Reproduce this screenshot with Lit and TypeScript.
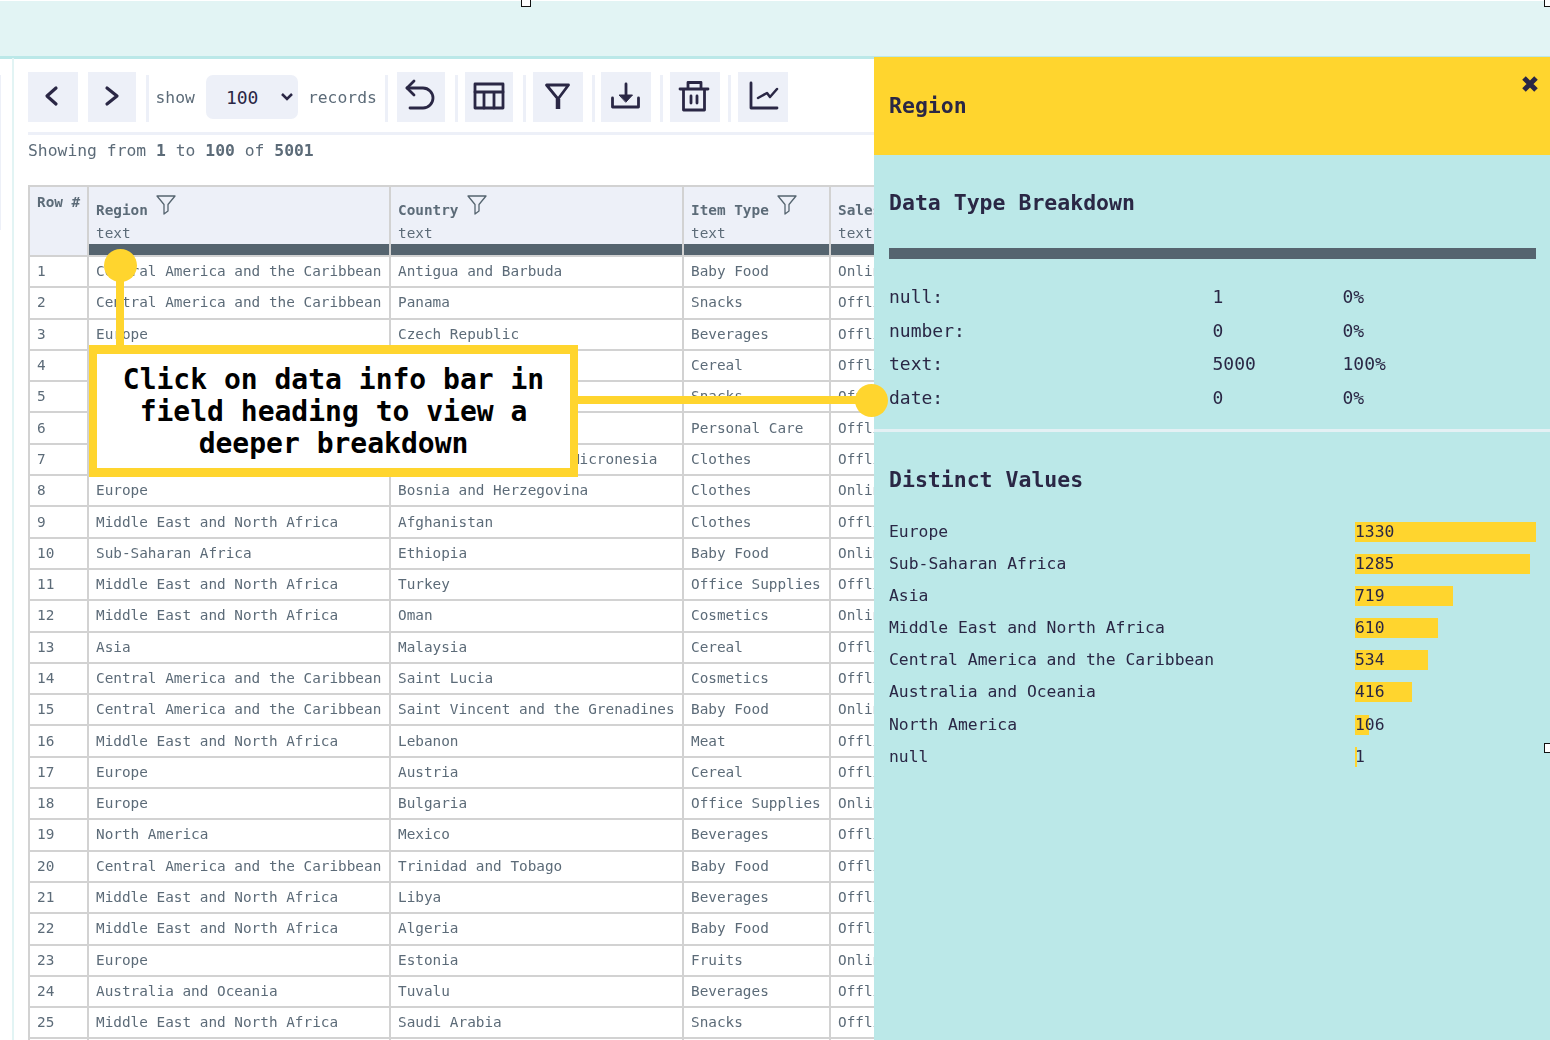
import { LitElement, html, css, svg } from "lit";
import { customElement } from "lit/decorators.js";

const rows: string[][] = [
  ["1","Central America and the Caribbean","Antigua and Barbuda","Baby Food","Online"],
  ["2","Central America and the Caribbean","Panama","Snacks","Offline"],
  ["3","Europe","Czech Republic","Beverages","Offline"],
  ["4","Asia","North Korea","Cereal","Offline"],
  ["5","Asia","Sri Lanka","Snacks","Offline"],
  ["6","Middle East and North Africa","Morocco","Personal Care","Offline"],
  ["7","Australia and Oceania","Federated States of Micronesia","Clothes","Offline"],
  ["8","Europe","Bosnia and Herzegovina","Clothes","Online"],
  ["9","Middle East and North Africa","Afghanistan","Clothes","Offline"],
  ["10","Sub-Saharan Africa","Ethiopia","Baby Food","Online"],
  ["11","Middle East and North Africa","Turkey","Office Supplies","Offline"],
  ["12","Middle East and North Africa","Oman","Cosmetics","Online"],
  ["13","Asia","Malaysia","Cereal","Offline"],
  ["14","Central America and the Caribbean","Saint Lucia","Cosmetics","Offline"],
  ["15","Central America and the Caribbean","Saint Vincent and the Grenadines","Baby Food","Online"],
  ["16","Middle East and North Africa","Lebanon","Meat","Offline"],
  ["17","Europe","Austria","Cereal","Offline"],
  ["18","Europe","Bulgaria","Office Supplies","Online"],
  ["19","North America","Mexico","Beverages","Offline"],
  ["20","Central America and the Caribbean","Trinidad and Tobago","Baby Food","Offline"],
  ["21","Middle East and North Africa","Libya","Beverages","Offline"],
  ["22","Middle East and North Africa","Algeria","Baby Food","Offline"],
  ["23","Europe","Estonia","Fruits","Online"],
  ["24","Australia and Oceania","Tuvalu","Beverages","Offline"],
  ["25","Middle East and North Africa","Saudi Arabia","Snacks","Offline"],
  ["26","Asia","Vietnam","Cereal","Offline"],
];

const types = [["null:","1","0%"],["number:","0","0%"],["text:","5000","100%"],["date:","0","0%"]];
const distinct: [string,number][] = [
  ["Europe",1330],["Sub-Saharan Africa",1285],["Asia",719],["Middle East and North Africa",610],
  ["Central America and the Caribbean",534],["Australia and Oceania",416],["North America",106],["null",1],
];

const funnelThin = svg`<svg class="hf" viewBox="0 0 20 20" fill="none" stroke="#55646f" stroke-width="1.3" stroke-linejoin="round"><path d="M1 1h18l-7 8.500V16l-4 3V9.500z"/></svg>`;
const icon = (body: unknown) => html`<svg class="ico" viewBox="0 0 36 36" fill="none" stroke="#2a2745" stroke-width="2.800" stroke-linecap="round" stroke-linejoin="round">${body}</svg>`;
const icons = {
  prev: svg`<path d="M21 9l-9 8 9 8" stroke-width="3.200"/>`,
  next: svg`<path d="M13 9l10 8-10 8" stroke-width="3.200"/>`,
  undo: svg`<path d="M11 2L4 9l7 7"/><path d="M4 9h16a10 10 0 0 1 0 20H7"/>`,
  table: svg`<path d="M4 5h28v24H4z" stroke-linecap="square"/><path d="M4 13h28M13 13v16M23 13v16"/>`,
  filter: svg`<path d="M6.500 6h22L18 20z"/><path d="M18 20v10" stroke-width="4.500" stroke-linecap="butt"/>`,
  down: svg`<path d="M18 5v12"/><path d="M11.500 16h13L18 23z" fill="#2a2745" stroke-width="1"/><path d="M4.500 19v9h26v-9"/>`,
  trash: svg`<path d="M3 10h28M11 10V3.500h13V10M6.500 10v21h21V10"/><path d="M14 17v7M20 17v7"/>`,
  chart: svg`<path d="M6 4v25h26"/><path d="M13 19l9-5 3 4 7-8" stroke-width="2.500"/>`,
};

@customElement("app-root")
export class AppRoot extends LitElement {
  static styles = css`
    :host { display: block; width: 1550px; height: 1040px; overflow: hidden; position: relative; background: #fff;
      font-family: "DejaVu Sans Mono", "Liberation Mono", monospace; color: #5c6b78; }
    .top { height: 55px; background: #e2f4f4; border-bottom: 3px solid #bbe8e8; margin-top: 1px; margin-bottom: -1px; }
    .body { height: 982px; display: flex; position: relative; filter: blur(0.350px); }
    .rail { width: 12px; flex: none; border-right: 2px solid #e2f4f4; position: relative; }
    .rail-tab { position: absolute; left: 0; top: 17px; height: 155px; width: 1px; background: #edf0f8; }
    .main { width: 862px; flex: none; padding: 14px 0 0 14px; box-sizing: border-box; overflow: hidden; }
    .toolbar { display: flex; align-items: center; height: 50px; width: 900px; }
    .btn { width: 48px; height: 50px; background: #edf0f8; display: flex; align-items: center; justify-content: center; flex: none; }
    .btn.w50 { width: 50px; }
    .btn.next { margin-left: 10px; }
    .sep { width: 3px; height: 47px; background: #edf0f8; margin: 3px 7px 0 9.500px; flex: none; }
    .sep.s0 { margin: 3px 9px 0 8.300px; }
    .sep.s1 { margin: 3px 7px 0 10px; }
    .sep.s2 { margin: 3px 6px 0 9px; }
    .sep.s3 { margin: 3px 7px 0 9px; }
    .sep.s4 { margin: 3px 7px 0 8px; }
    .ico { width: 36px; height: 36px; }
    .lbl { font-size: 16.360px; flex: none; }
    .select { width: 92px; height: 44px; margin: 0 10px 0 11px; background: #edf0f8; border-radius: 7px; display: flex; align-items: center; box-sizing: border-box; padding-left: 20px; color: #2a2745; font-size: 18px; position: relative; flex: none; }
    .chev { position: absolute; right: 4px; top: 17px; width: 14px; height: 10px; }
    .rule { height: 3px; background: #edf0f8; margin-top: 10px; width: 900px; }
    .status { font-size: 16.360px; margin-top: 4px; line-height: 24px; height: 24px; white-space: pre; }
    table { border-collapse: collapse; table-layout: fixed; width: 999px; margin-top: 22px; font-size: 14.360px; }
    col.c0 { width: 59px; } col.c1 { width: 302px; } col.c2 { width: 293px; } col.c3 { width: 147px; } col.c4 { width: 198px; }
    th, td { border: 2px solid #d2d2d2; padding: 0 0 0 7px; text-align: left; white-space: nowrap; overflow: hidden; font-weight: normal; }
    td { height: 28.300px; padding-bottom: 1px; line-height: 20px; }
    th { background: #edf0f8; vertical-align: top; padding: 0; }
    .th-in { height: 57px; padding: 6px 0 0 7px; box-sizing: border-box; }
    .name { font-weight: bold; display: inline-block; margin-top: 7px; line-height: 20px; }
    .hf { width: 20px; height: 20px; position: relative; top: 1px; margin-left: 8px; vertical-align: top; margin-top: 1px; }
    .type { line-height: 20px; margin-top: 3px; }
    .bar { height: 11px; background: #55646f; }
    .row-head { padding: 5px 0 0 7px; line-height: 20px; font-weight: bold; }
    .panel { position: absolute; left: 874px; top: 57px; width: 676px; height: 983px; background: #bbe8e8; color: #2a2745; overflow: hidden; filter: blur(0.350px); }
    .ph { height: 98px; background: #ffd52e; position: relative; }
    .ph h1 { margin: 0; position: absolute; left: 15px; top: 35px; font-size: 21.500px; line-height: 28px; font-weight: bold; }
    .x { position: absolute; right: 12px; top: 19px; width: 16px; height: 16px; }
    .sec1 { padding: 35px 14px 0 15px; height: 277px; box-sizing: border-box; border-bottom: 3px solid #e4f0f4; }
    h2 { margin: 0; font-size: 21.500px; line-height: 26px; font-weight: bold; }
    .pbar { height: 11px; background: #55646f; margin-top: 32px; }
    .types { margin-top: 21px; font-size: 18px; display: grid; grid-template-columns: 323.500px 130px 1fr; }
    .types div { height: 33.600px; line-height: 33.600px; }
    .sec2 { padding: 35px 14px 0 15px; }
    .dist { margin-top: 22.500px; display: grid; grid-template-columns: 466px 1fr; font-size: 16.360px; }
    .n { height: 32.200px; line-height: 32.200px; white-space: nowrap; }
    .dv { position: relative; height: 32.200px; line-height: 32.200px; }
    .fill { position: absolute; left: 0; top: 6px; height: 20px; background: #ffd52e; }
    .val { position: relative; }
    .callout { position: absolute; left: 89px; top: 345px; width: 489px; height: 132px; box-sizing: border-box; border: 9px solid #ffd52e; border-width: 9px 8px; background: #fff; color: #000;
      font-size: 28px; font-weight: bold; line-height: 32px; text-align: center; padding: 10px 6px 0; }
    .vline { position: absolute; left: 116px; top: 266px; width: 8px; height: 82px; background: #ffd52e; }
    .hline { position: absolute; left: 577px; top: 396px; width: 295px; height: 8px; background: #ffd52e; }
    .dot { position: absolute; width: 33px; height: 33px; border-radius: 50%; background: #ffd52e; }
    .dot.a { left: 104px; top: 249px; }
    .dot.b { left: 855px; top: 384px; }
    .handle { position: absolute; box-sizing: border-box; border: 1px solid #111; background: #fff; width: 10px; height: 10px; }
    .h1 { left: 521px; top: -3px; }
    .h2 { left: 1544px; top: -3px; }
    .h3 { left: 1544px; top: 743px; }
  `;

  render() {
    const max = 1330;
    return html`
      <div class="top"></div>
      <div class="body">
        <div class="rail"><div class="rail-tab"></div></div>
        <div class="main">
          <div class="toolbar">
            <div class="btn w50">${icon(icons.prev)}</div>
            <div class="btn next">${icon(icons.next)}</div>
            <div class="sep"></div>
            <span class="lbl">show</span>
            <div class="select">100
              <svg class="chev" viewBox="0 0 14 10" fill="none" stroke="#2a2745" stroke-width="2.500"><path d="M2 2l5 5 5-5"/></svg>
            </div>
            <span class="lbl">records</span>
            <div class="sep s0"></div>
            <div class="btn">${icon(icons.undo)}</div>
            <div class="sep s1"></div>
            <div class="btn">${icon(icons.table)}</div>
            <div class="sep s1"></div>
            <div class="btn w50">${icon(icons.filter)}</div>
            <div class="sep s2"></div>
            <div class="btn w50">${icon(icons.down)}</div>
            <div class="sep s3"></div>
            <div class="btn w50">${icon(icons.trash)}</div>
            <div class="sep s4"></div>
            <div class="btn w50">${icon(icons.chart)}</div>
          </div>
          <div class="rule"></div>
          <div class="status">Showing from <b>1</b> to <b>100</b> of <b>5001</b></div>
          <table>
            <colgroup><col class="c0"/><col class="c1"/><col class="c2"/><col class="c3"/><col class="c4"/></colgroup>
            <thead><tr>
              <th><div class="row-head">Row #</div></th>
              ${["Region","Country","Item Type","Sales Channel"].map(n => html`
                <th><div class="th-in"><span class="name">${n}</span>${funnelThin}<div class="type">text</div></div><div class="bar"></div></th>`)}
            </tr></thead>
            <tbody>
              ${rows.map(r => html`<tr>${r.map(c => html`<td>${c}</td>`)}</tr>`)}
            </tbody>
          </table>
        </div>
      </div>

      <div class="panel">
        <div class="ph"><h1>Region</h1>
          <svg class="x" viewBox="0 0 16 16" fill="none" stroke="#2a2745" stroke-width="5"><path d="M2 2l12 12M14 2L2 14"/></svg>
        </div>
        <div class="sec1">
          <h2>Data Type Breakdown</h2>
          <div class="pbar"></div>
          <div class="types">
            ${types.map(t => html`<div>${t[0]}</div><div>${t[1]}</div><div>${t[2]}</div>`)}
          </div>
        </div>
        <div class="sec2">
          <h2>Distinct Values</h2>
          <div class="dist">
            ${distinct.map(([n,v]) => html`
              <div class="n">${n}</div>
              <div class="dv"><div class="fill" style="width:${Math.max(2,(v/max)*181)}px"></div><span class="val">${v}</span></div>`)}
          </div>
        </div>
      </div>

      <div class="vline"></div>
      <div class="hline"></div>
      <div class="dot a"></div>
      <div class="dot b"></div>
      <div class="callout">Click on data info bar in field heading to view a deeper breakdown</div>
      <div class="handle h1"></div>
      <div class="handle h2"></div>
      <div class="handle h3"></div>
    `;
  }
}
